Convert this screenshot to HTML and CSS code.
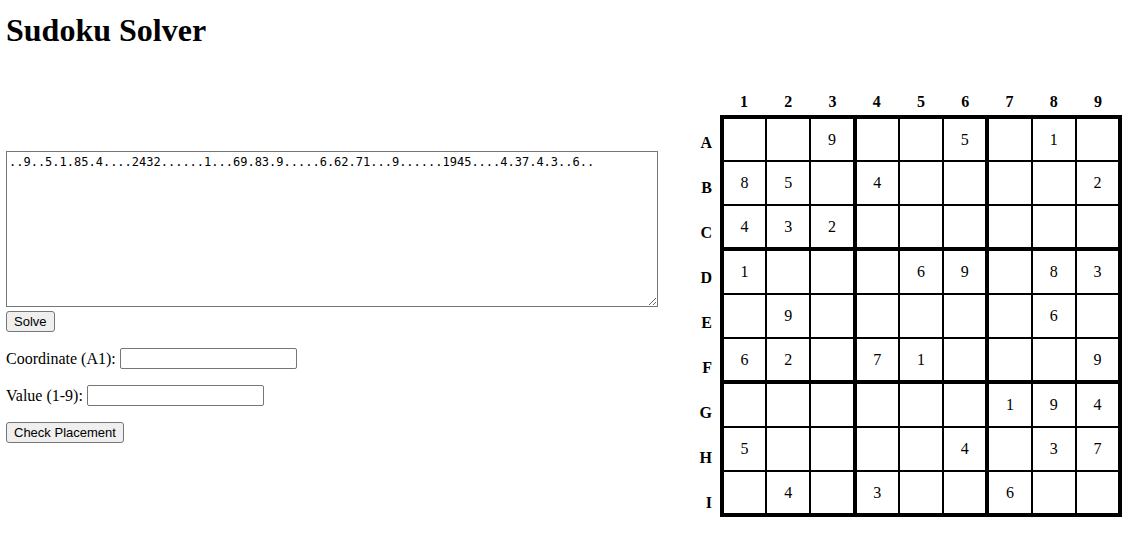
FILE: index.html
```html
<!DOCTYPE html>
<html lang="en">
<head>
<meta charset="utf-8">
<title>Sudoku Solver</title>
<link rel="stylesheet" href="styles.css">
</head>
<body>
<header>
  <h1 class="title">Sudoku Solver</h1>
</header>
<main class="layout">
  <div class="forms">
    <form class="solve-form">
      <textarea class="puzzle" name="puzzle" aria-label="Puzzle" spellcheck="false">..9..5.1.85.4....2432......1...69.83.9.....6.62.71...9......1945....4.37.4.3..6..</textarea>
      <button class="button" type="button">Solve</button>
    </form>
    <form class="check-form">
      <div class="field"><label for="coord">Coordinate (A1):</label><input class="text-input" id="coord" type="text" name="coordinate"></div>
      <div class="field"><label for="val">Value (1-9):</label><input class="text-input" id="val" type="text" name="value"></div>
      <button class="button" type="button">Check Placement</button>
    </form>
  </div>
  <div class="board">
    <div class="row-labels">
      <span>A</span><span>B</span><span>C</span><span>D</span><span>E</span><span>F</span><span>G</span><span>H</span><span>I</span>
    </div>
    <table class="grid">
      <thead>
        <tr><th>1</th><th>2</th><th>3</th><th>4</th><th>5</th><th>6</th><th>7</th><th>8</th><th>9</th></tr>
      </thead>
      <tbody>
        <tr><td></td><td></td><td>9</td><td></td><td></td><td>5</td><td></td><td>1</td><td></td></tr>
        <tr><td>8</td><td>5</td><td></td><td>4</td><td></td><td></td><td></td><td></td><td>2</td></tr>
        <tr><td>4</td><td>3</td><td>2</td><td></td><td></td><td></td><td></td><td></td><td></td></tr>
        <tr><td>1</td><td></td><td></td><td></td><td>6</td><td>9</td><td></td><td>8</td><td>3</td></tr>
        <tr><td></td><td>9</td><td></td><td></td><td></td><td></td><td></td><td>6</td><td></td></tr>
        <tr><td>6</td><td>2</td><td></td><td>7</td><td>1</td><td></td><td></td><td></td><td>9</td></tr>
        <tr><td></td><td></td><td></td><td></td><td></td><td></td><td>1</td><td>9</td><td>4</td></tr>
        <tr><td>5</td><td></td><td></td><td></td><td></td><td>4</td><td></td><td>3</td><td>7</td></tr>
        <tr><td></td><td>4</td><td></td><td>3</td><td></td><td></td><td>6</td><td></td><td></td></tr>
      </tbody>
    </table>
  </div>
</main>
</body>
</html>
```
FILE: styles.css
```css
* {
  box-sizing: border-box;
}

body {
  margin: 0;
  padding: 12px 21px 16px 6px;
  background: #fff;
  color: #000;
  font: 16px/18px "Liberation Serif", "Times New Roman", serif;
}

.title {
  margin: 0 0 44px;
  font-size: 32px;
  line-height: 36px;
}

.layout {
  display: flex;
  align-items: flex-start;
  gap: 34px;
}

.forms {
  flex: 1;
  min-width: 0;
  padding-top: 59px;
}

.puzzle {
  display: block;
  width: 100%;
  height: 156px;
  margin: 0 0 4px;
  padding: 2px;
  border: 1px solid #767676;
  font: 12px/16px "DejaVu Sans Mono", monospace;
}

.button {
  display: block;
  height: 21px;
  padding: 0 7px;
  border: 1px solid #767676;
  border-radius: 3px;
  background: #efefef;
  color: #000;
  font: 13px/15px "Liberation Sans", Arial, sans-serif;
}

.check-form {
  display: flex;
  flex-direction: column;
  align-items: flex-start;
  gap: 16px;
  margin-top: 16px;
}

.field {
  display: flex;
  align-items: center;
  gap: 4px;
}

.text-input {
  width: 177px;
  height: 21px;
  margin: 0;
  padding: 1px 2px;
  border: 1px solid #767676;
  border-radius: 2px;
  font: 13px/15px "Liberation Sans", Arial, sans-serif;
}

.board {
  display: flex;
  gap: 8px;
}

.row-labels {
  display: flex;
  flex-direction: column;
  width: 20px;
  padding-top: 28px;
  font-weight: bold;
  line-height: 45px;
  text-align: right;
}

.grid {
  align-self: flex-start;
  table-layout: fixed;
  width: 402px;
  border-collapse: collapse;
}

.grid th,
.grid td {
  padding: 0;
  text-align: center;
}

.grid th {
  height: 25px;
  padding-bottom: 4px;
}

.grid tbody {
  border: 4px solid #000;
}

.grid td {
  height: 44px;
  border: 2px solid #000;
}

.grid tbody tr:nth-child(3n) td {
  border-bottom-width: 4px;
}

.grid tbody tr:nth-child(3n + 4) td {
  height: 45px;
}

.grid tbody tr:first-child td {
  border-top-width: 4px;
}

.grid td:nth-child(3n) {
  border-right-width: 4px;
}

.grid td:first-child {
  border-left-width: 4px;
}
```
